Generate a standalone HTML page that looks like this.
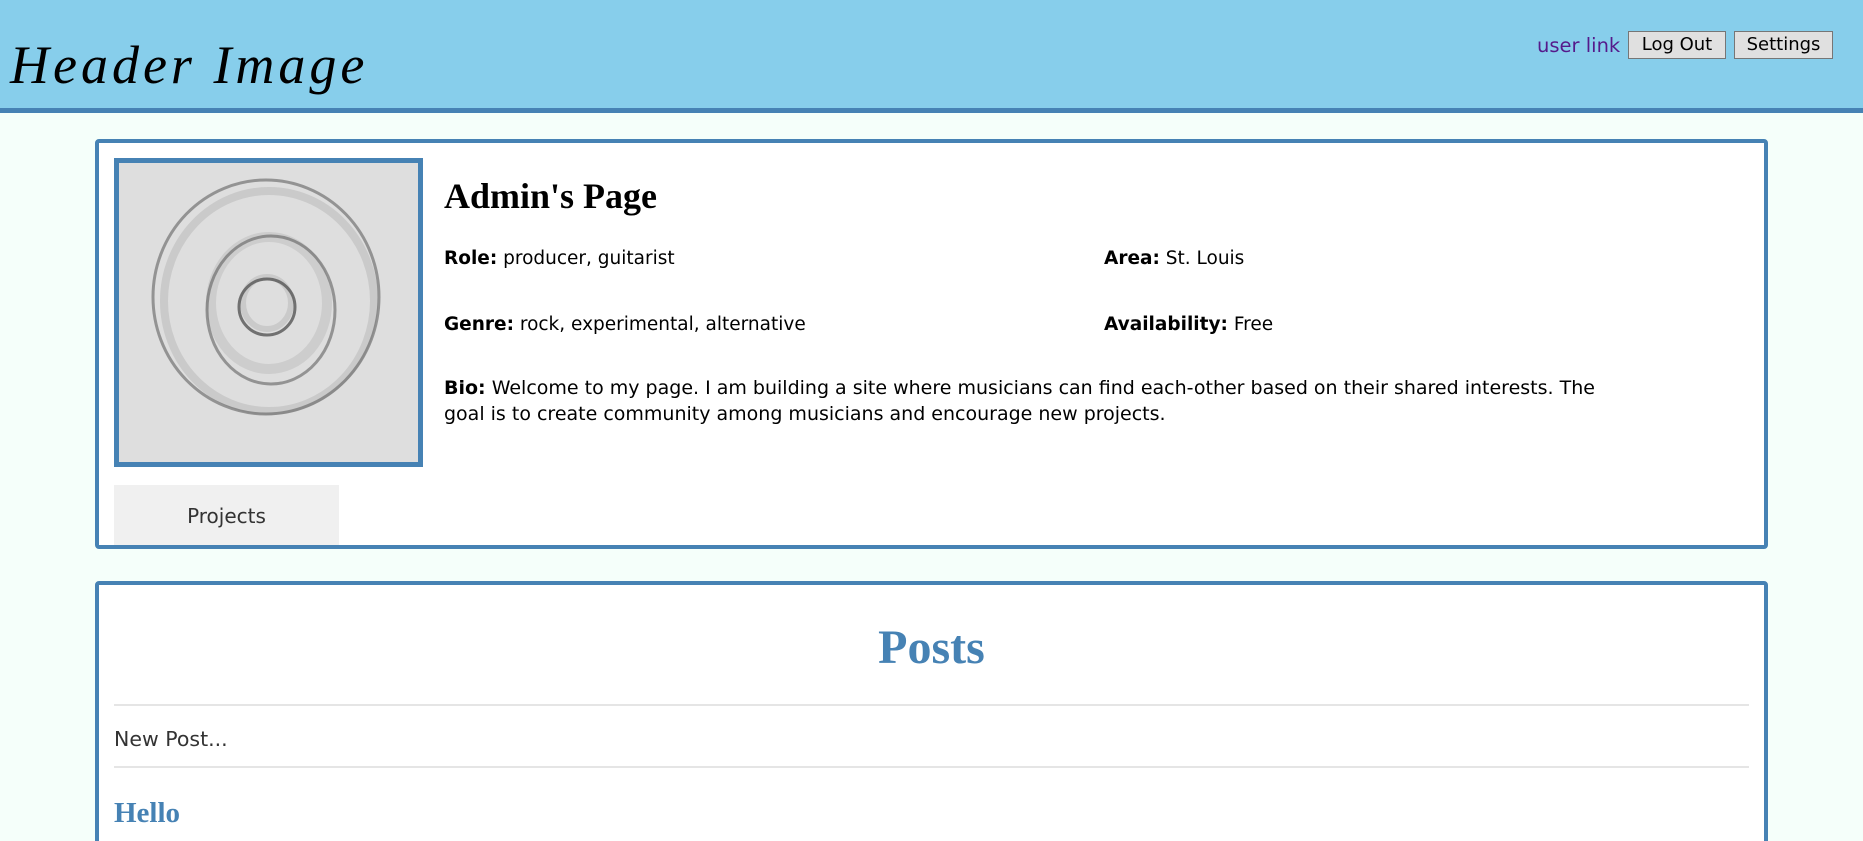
<!DOCTYPE html>
<html style="width:1863px;height:841px;overflow:hidden"><head><meta charset="utf-8"><style>
*{box-sizing:border-box;margin:0;padding:0}
body{width:1863px;height:841px;overflow:hidden;background:#f5fffa;font-family:"DejaVu Sans","Liberation Sans",sans-serif;position:relative}
.hdr{position:absolute;left:0;top:0;width:1863px;height:113px;background:#87ceeb;border-bottom:5px solid #4682b4}
.logo{position:absolute;left:10px;top:34px;font-family:"Liberation Serif",serif;font-style:italic;font-size:54px;color:#000;letter-spacing:4px}
.ul{position:absolute;left:1537px;top:34px;font-size:19.5px;color:#551a8b;font-family:"DejaVu Sans",sans-serif}
.btn{position:absolute;top:31px;height:28px;background:#e0e0e0;border:1px solid #767676;font-size:18px;text-align:center;line-height:26px;color:#000}
.card{position:absolute;left:95px;width:1673px;background:#fff;border:4px solid #4682b4;border-radius:4px}
.b{font-weight:bold}
.t{position:absolute;font-size:18.5px;color:#000;white-space:nowrap}
</style></head><body>
<div class="hdr">
<div class="logo">Header Image</div>
<div class="ul">user link</div>
<div class="btn" style="left:1628px;width:98px">Log Out</div>
<div class="btn" style="left:1734px;width:99px">Settings</div>
</div>
<div class="card" style="top:139px;height:410px">
<div style="position:absolute;left:15px;top:15px;width:309px;height:309px;border:5px solid #4682b4;background:#dedede">
<svg width="299" height="299" viewBox="0 0 299 299">
<g fill="none" stroke="#555" stroke-opacity=".55">
<ellipse cx="147" cy="134" rx="113" ry="117" stroke-width="3"/>
<ellipse cx="150" cy="138" rx="105" ry="110" stroke-width="8" stroke-opacity=".15"/>
<ellipse cx="152" cy="147" rx="64" ry="74" stroke-width="3"/>
<ellipse cx="150" cy="140" rx="58" ry="66" stroke-width="10" stroke-opacity=".12"/>
<ellipse cx="148" cy="144" rx="28" ry="28" stroke-width="3" stroke-opacity=".8"/>
<ellipse cx="148" cy="140" rx="24" ry="26" stroke-width="6" stroke-opacity=".15"/>
</g></svg></div>
<div style="position:absolute;left:345px;top:32px;font-family:'Liberation Serif',serif;font-weight:bold;font-size:36px">Admin's Page</div>
<div class="t" style="left:345px;top:105px"><span class="b">Role:</span> producer, guitarist</div>
<div class="t" style="left:1005px;top:105px"><span class="b">Area:</span> St. Louis</div>
<div class="t" style="left:345px;top:171px"><span class="b">Genre:</span> rock, experimental, alternative</div>
<div class="t" style="left:1005px;top:171px"><span class="b">Availability:</span> Free</div>
<div class="t" style="left:345px;top:232px;line-height:26px;font-size:19px"><span class="b">Bio:</span> Welcome to my page. I am building a site where musicians can find each-other based on their shared interests. The<br>goal is to create community among musicians and encourage new projects.</div>
<div style="position:absolute;left:15px;top:342px;width:225px;height:60px;background:#f0f0f0;font-size:20px;color:#333;text-align:center;line-height:62px">Projects</div>
</div>
<div class="card" style="top:581px;height:270px">
<div style="position:absolute;left:0;width:100%;top:35px;text-align:center;font-family:'Liberation Serif',serif;font-weight:bold;font-size:48px;color:#4682b4">Posts</div>
<div style="position:absolute;left:15px;right:15px;top:119px;border-top:2px solid #e5e5e5"></div>
<div style="position:absolute;left:15px;top:142px;font-size:20.5px;color:#333">New Post...</div>
<div style="position:absolute;left:15px;right:15px;top:181px;border-top:2px solid #e5e5e5"></div>
<div style="position:absolute;left:15px;top:212px;font-family:'Liberation Serif',serif;font-weight:bold;font-size:29px;color:#4682b4">Hello</div>
</div>
</body></html>
